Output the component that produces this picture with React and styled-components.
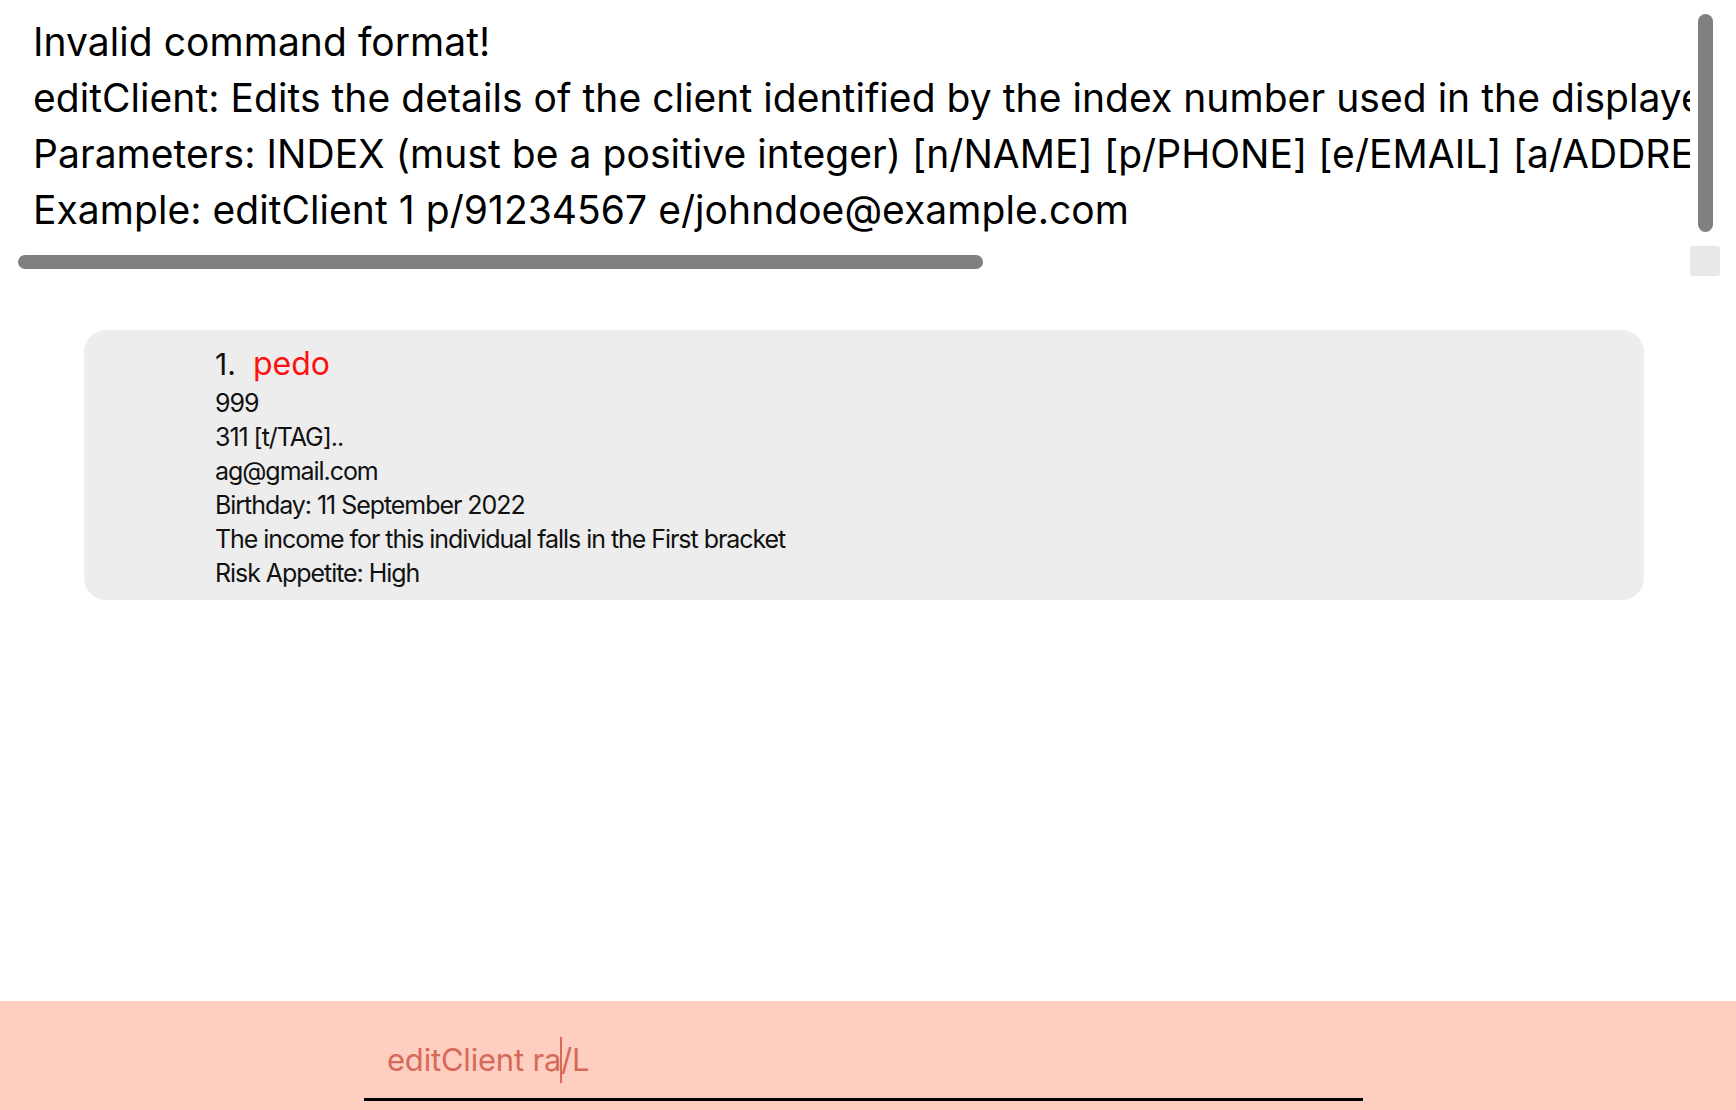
import React from "react";
import styled, { createGlobalStyle } from "styled-components";

const Global = createGlobalStyle`
  html, body {
    margin: 0;
    padding: 0;
    background: #ffffff;
  }
  body {
    font-family: Inter, "Noto Sans", "Liberation Sans", sans-serif;
    color: #111;
  }
`;

const Window = styled.div`
  width: 1736px;
  height: 1110px;
  display: flex;
  flex-direction: column;
  overflow: hidden;
  background: #fff;
`;

const ResultPane = styled.div`
  position: relative;
  height: 282px;
  flex: none;
`;

// visible viewport of the scroll pane, text is clipped at its right edge
const ResultViewport = styled.div`
  width: 1690px;
  height: 250px;
  overflow: hidden;
`;

const ResultText = styled.div`
  padding: 14px 0 0 33px;
  font-size: 39px;
  line-height: 56px;
  letter-spacing: 0.05px;
  white-space: pre;
  color: #000;
`;

const Thumb = styled.div`
  position: absolute;
  background: #808080;
  border-radius: 8px;
  ${(p) => (p.$horizontal
    ? "left: 18px; top: 255px; width: 965px; height: 14px;"
    : "left: 1698px; top: 14px; width: 15px; height: 218px;")}
`;

const Corner = styled.div`
  position: absolute;
  left: 1690px;
  top: 246px;
  width: 30px;
  height: 30px;
  border-radius: 3px;
  background: #e8e8e8;
`;

const ListArea = styled.div`
  flex: 1;
  padding: 48px 0 0 84px;
`;

const Card = styled.div`
  width: 1560px;
  height: 270px;
  box-sizing: border-box;
  padding: 14px 0 0 131px;
  border-radius: 22px;
  background: #ededed;
`;

const Title = styled.div`
  display: flex;
  align-items: baseline;
  height: 42px;
  line-height: 40px;
  font-size: 30px;
  color: #111;
`;

const Index = styled.span`
  width: 38px;
`;

const Name = styled.span`
  color: #ff1111;
  font-size: 32px;
`;

const Detail = styled.div`
  font-size: 25px;
  line-height: 34px;
  letter-spacing: -1.05px;
  color: #111;
`;

const CommandBar = styled.div`
  height: 109px;
  flex: none;
  background: #fecfc1;
  padding: 36px 0 0 364px;
  box-sizing: border-box;
`;

const CommandInput = styled.div`
  width: 999px;
  box-sizing: border-box;
  padding: 0 0 15px 23px;
  border-bottom: 3px solid #000;
  font-size: 31px;
  line-height: 46px;
  letter-spacing: -0.2px;
  color: #d66a58;
  white-space: pre;
`;

const Caret = styled.span`
  display: inline-block;
  width: 2px;
  height: 46px;
  margin: 0 -1px;
  vertical-align: top;
  background: #d66a58;
`;

const resultLines = [
  "Invalid command format!",
  "editClient: Edits the details of the client identified by the index number used in the displayed client list. Existing values will be overwritten by the input values.",
  "Parameters: INDEX (must be a positive integer) [n/NAME] [p/PHONE] [e/EMAIL] [a/ADDRESS] [b/BIRTHDAY] [i/INCOME] [ra/RISK_APPETITE] [t/TAG]...",
  "Example: editClient 1 p/91234567 e/johndoe@example.com",
];

const details = [
  "999",
  "311 [t/TAG]..",
  "ag@gmail.com",
  "Birthday: 11 September 2022",
  "The income for this individual falls in the First bracket",
  "Risk Appetite: High",
];

export default function App() {
  return (
    <Window>
      <Global />
      <ResultPane>
        <ResultViewport>
          <ResultText>
            {resultLines.map((l) => (
              <div key={l}>{l}</div>
            ))}
          </ResultText>
        </ResultViewport>
        <Thumb $horizontal />
        <Thumb />
        <Corner />
      </ResultPane>
      <ListArea>
        <Card>
          <Title>
            <Index>1.</Index>
            <Name>pedo</Name>
          </Title>
          {details.map((d) => (
            <Detail key={d}>{d}</Detail>
          ))}
        </Card>
      </ListArea>
      <CommandBar>
        <CommandInput>
          editClient ra<Caret />/L
        </CommandInput>
      </CommandBar>
    </Window>
  );
}
